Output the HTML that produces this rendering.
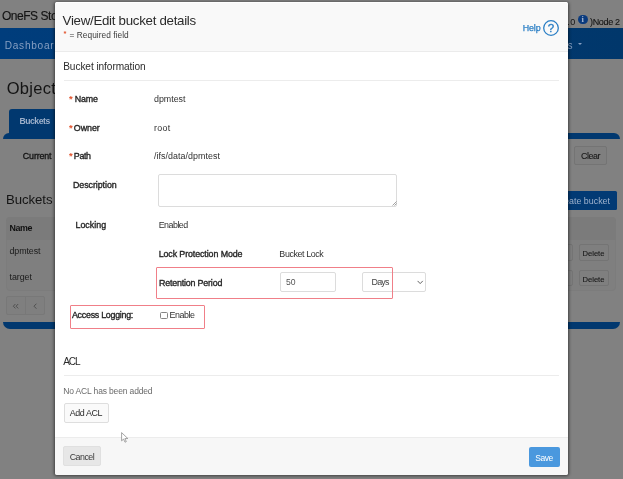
<!DOCTYPE html>
<html><head><meta charset="utf-8">
<style>
*{box-sizing:border-box;margin:0;padding:0}
html,body{width:623px;height:479px;overflow:hidden;background:#818181;font-family:'Liberation Sans', sans-serif;}
.abs{position:absolute}
.t{position:absolute;white-space:nowrap;line-height:1}
#bg{will-change:transform;position:absolute;left:0;top:0;width:623px;height:479px;background:#818181;overflow:hidden}
#modal{will-change:transform;position:absolute;left:54.8px;top:1.6px;width:513px;height:472.6px;background:#fff;border-radius:2.5px;box-shadow:0 0.5px 3px 0.5px rgba(0,0,0,.5);overflow:hidden}
</style></head><body>
<div id="bg">
<div class="abs" style="left:0.00px;top:27.80px;width:623.00px;height:31.70px;background:linear-gradient(90deg,#003d7c 0%,#01376b 100%);"></div>
<div class="abs" style="left:578.10px;top:14.60px;width:9.60px;height:9.60px;border-radius:50%;background:#0b3b7e;"></div>
<div class="abs" style="left:578.4px;top:43.2px;width:0;height:0;border-left:2.4px solid transparent;border-right:2.4px solid transparent;border-top:2.6px solid #869fc2"></div>
<div class="abs" style="left:9.00px;top:109.30px;width:71.00px;height:25.70px;background:#01386f;border-radius:3px 3px 0 0;"></div>
<div class="abs" style="left:2.80px;top:132.70px;width:617.20px;height:6.70px;background:#01386f;border-radius:7px 7px 0 0;"></div>
<div class="abs" style="left:574.30px;top:145.70px;width:32.30px;height:19.70px;border:1px solid #747474;border-radius:2px;background:#7f7f7f;"></div>
<div class="abs" style="left:500.00px;top:191.00px;width:116.60px;height:18.80px;background:#023a74;border-radius:1.5px;"></div>
<div class="abs" style="left:6.20px;top:217.00px;width:610.10px;height:74.00px;background:#7f7f7f;border:1px solid #7c7c7c;border-radius:4px;"></div>
<div class="abs" style="left:6.20px;top:217.00px;width:610.10px;height:22.50px;background:#7b7b7b;border-radius:4px 4px 0 0;"></div>
<div class="abs" style="left:578.90px;top:244.30px;width:29.80px;height:16.30px;border:1px solid #747474;border-radius:2px;background:#7f7f7f;"></div>
<div class="abs" style="left:578.90px;top:270.20px;width:29.80px;height:16.20px;border:1px solid #747474;border-radius:2px;background:#7f7f7f;"></div>
<div class="abs" style="left:540.00px;top:244.30px;width:32.60px;height:16.30px;border:1px solid #747474;border-radius:2px;background:#7f7f7f;"></div>
<div class="abs" style="left:540.00px;top:270.20px;width:32.60px;height:16.20px;border:1px solid #747474;border-radius:2px;background:#7f7f7f;"></div>
<div class="abs" style="left:6.40px;top:295.70px;width:19.90px;height:19.30px;border:1px solid #787878;border-radius:2px 0 0 2px;background:#7f7f7f;"></div>
<div class="abs" style="left:25.30px;top:295.70px;width:19.70px;height:19.30px;border:1px solid #787878;border-radius:0 2px 2px 0;background:#7f7f7f;"></div>
<svg class="abs" style="left:12px;top:302px" width="28" height="9" viewBox="0 0 28 9"><path d="M3.4 2.0 L1.3 4.2 L3.4 6.4 M6.2 2.0 L4.1 4.2 L6.2 6.4 M24.4 1.7 L22.0 4.2 L24.4 6.7" fill="none" stroke="#505050" stroke-width="1.0"/></svg>
<div class="abs" style="left:2.80px;top:321.80px;width:617.20px;height:6.90px;background:#01386f;border-radius:0 0 7px 7px;"></div>
<div class="t" style="left:1.88px;top:10.14px;font-size:12.0px;color:#141414;letter-spacing:-0.450px;-webkit-text-stroke:0.15px #141414;">OneFS Storage</div>
<div class="t" style="left:567.36px;top:17.68px;font-size:9px;color:#141414;letter-spacing:0.464px;">.0</div>
<div class="t" style="left:590.06px;top:17.68px;font-size:9px;color:#141414;letter-spacing:-0.342px;-webkit-text-stroke:0.1px #141414;">)Node 2</div>
<div class="t" style="left:4.69px;top:41.15px;font-size:10.1px;color:#869fc2;letter-spacing:0.750px;">Dashboard</div>
<div class="t" style="left:567.59px;top:41.15px;font-size:10.1px;color:#869fc2;letter-spacing:0.000px;">s</div>
<div class="t" style="left:6.71px;top:79.53px;font-size:16.5px;color:#141414;letter-spacing:0.300px;">Object</div>
<div class="t" style="left:19.38px;top:116.82px;font-size:8.6px;color:#9db0ca;letter-spacing:-0.418px;font-weight:bold;">Buckets</div>
<div class="t" style="left:22.87px;top:151.67px;font-size:8.9px;color:#141414;letter-spacing:-0.154px;-webkit-text-stroke:0.3px #141414;">Current</div>
<div class="t" style="left:580.97px;top:151.97px;font-size:8.9px;color:#181818;letter-spacing:-0.413px;-webkit-text-stroke:0.1px #181818;">Clear</div>
<div class="t" style="left:5.91px;top:193.13px;font-size:13.2px;color:#141414;letter-spacing:-0.056px;">Buckets</div>
<div class="t" style="left:554.77px;top:197.47px;font-size:8.9px;color:#9fb2cd;letter-spacing:0.000px;">Create bucket</div>
<div class="t" style="left:9.47px;top:223.87px;font-size:8.9px;color:#101010;letter-spacing:-0.373px;font-weight:bold;">Name</div>
<div class="t" style="left:9.47px;top:246.87px;font-size:8.9px;color:#1a1a1a;letter-spacing:-0.085px;">dpmtest</div>
<div class="t" style="left:9.47px;top:272.67px;font-size:8.9px;color:#1a1a1a;letter-spacing:-0.047px;">target</div>
<div class="t" style="left:582.54px;top:249.97px;font-size:7.6px;color:#161616;letter-spacing:-0.008px;-webkit-text-stroke:0.1px #161616;">Delete</div>
<div class="t" style="left:582.54px;top:275.87px;font-size:7.6px;color:#161616;letter-spacing:-0.008px;-webkit-text-stroke:0.1px #161616;">Delete</div>
<div class="t" style="left:581.6px;top:15.2px;font-size:8.5px;color:#a9b9d0;font-weight:bold;font-family:'Liberation Serif',serif">i</div>
</div>
<div id="modal">
<div class="abs" style="left:0.00px;top:0.00px;width:513.00px;height:49.60px;background:#f9f9f9;border-bottom:1px solid #ebebeb;border-top:1px solid #fff;"></div>
<div class="abs" style="left:8.50px;top:77.90px;width:495.70px;height:1.00px;background:#ececec;"></div>
<div class="abs" style="left:103.40px;top:172.40px;width:239.00px;height:32.40px;border:1px solid #dcdcdc;border-radius:2px;background:#fff;"></div>
<div class="abs" style="left:224.60px;top:270.40px;width:56.80px;height:19.60px;border:1px solid #dcdcdc;border-radius:2px;background:#fff;"></div>
<div class="abs" style="left:307.40px;top:270.40px;width:63.60px;height:19.60px;border:1px solid #dcdcdc;border-radius:2px;background:#fff;"></div>
<div class="abs" style="left:100.60px;top:265.40px;width:237.80px;height:31.30px;border:1px solid #f07f88;border-radius:1px;"></div>
<div class="abs" style="left:14.60px;top:302.70px;width:135.60px;height:23.90px;border:1px solid #f07f88;border-radius:1px;"></div>
<div class="abs" style="left:105.20px;top:310.10px;width:7.40px;height:7.40px;border:1px solid #858585;border-radius:1.5px;background:#fff;"></div>
<div class="abs" style="left:8.50px;top:372.60px;width:495.70px;height:1.00px;background:#ececec;"></div>
<div class="abs" style="left:8.50px;top:401.30px;width:45.30px;height:19.50px;border:1px solid #dedede;border-radius:2px;background:#fafafa;"></div>
<div class="abs" style="left:0.00px;top:435.30px;width:513.00px;height:37.30px;background:#f7f7f7;border-top:1px solid #ececec;"></div>
<div class="abs" style="left:8.30px;top:444.40px;width:38.10px;height:20.00px;border:1px solid #e0e0e0;border-radius:2px;background:#e7e7e7;"></div>
<div class="abs" style="left:473.70px;top:445.40px;width:30.90px;height:20.00px;border-radius:2px;background:#4a98de;"></div>
<div class="t" style="left:7.60px;top:12.04px;font-size:13.3px;color:#2b2b2b;letter-spacing:-0.287px;">View/Edit bucket details</div>
<div class="t" style="left:14.50px;top:28.67px;font-size:8.3px;color:#3a3a3a;letter-spacing:0.056px;">= Required field</div>
<div class="t" style="left:467.67px;top:21.67px;font-size:8.9px;color:#2b7fc5;letter-spacing:-0.066px;-webkit-text-stroke:0.25px #2b7fc5;">Help</div>
<div class="t" style="left:8.19px;top:59.95px;font-size:10.1px;color:#2b2b2b;letter-spacing:-0.065px;">Bucket information</div>
<div class="t" style="left:19.87px;top:93.07px;font-size:8.9px;color:#262626;letter-spacing:-0.173px;-webkit-text-stroke:0.35px #262626;">Name</div>
<div class="t" style="left:98.97px;top:93.07px;font-size:8.9px;color:#303030;letter-spacing:-0.018px;">dpmtest</div>
<div class="t" style="left:18.87px;top:121.67px;font-size:8.9px;color:#262626;letter-spacing:-0.068px;-webkit-text-stroke:0.35px #262626;">Owner</div>
<div class="t" style="left:98.97px;top:121.67px;font-size:8.9px;color:#303030;letter-spacing:0.357px;">root</div>
<div class="t" style="left:18.87px;top:149.97px;font-size:8.9px;color:#262626;letter-spacing:-0.366px;-webkit-text-stroke:0.35px #262626;">Path</div>
<div class="t" style="left:98.97px;top:149.97px;font-size:8.9px;color:#303030;letter-spacing:0.059px;">/ifs/data/dpmtest</div>
<div class="t" style="left:17.97px;top:178.87px;font-size:8.9px;color:#262626;letter-spacing:-0.064px;-webkit-text-stroke:0.35px #262626;">Description</div>
<div class="t" style="left:20.47px;top:219.27px;font-size:8.9px;color:#262626;letter-spacing:0.012px;-webkit-text-stroke:0.35px #262626;">Locking</div>
<div class="t" style="left:103.67px;top:219.27px;font-size:8.9px;color:#303030;letter-spacing:-0.502px;">Enabled</div>
<div class="t" style="left:103.67px;top:248.17px;font-size:8.9px;color:#262626;letter-spacing:-0.104px;-webkit-text-stroke:0.35px #262626;">Lock Protection Mode</div>
<div class="t" style="left:224.37px;top:248.17px;font-size:8.9px;color:#303030;letter-spacing:-0.399px;">Bucket Lock</div>
<div class="t" style="left:103.97px;top:276.57px;font-size:8.9px;color:#262626;letter-spacing:-0.184px;-webkit-text-stroke:0.35px #262626;">Retention Period</div>
<div class="t" style="left:231.08px;top:276.42px;font-size:8.6px;color:#555;letter-spacing:-0.130px;">50</div>
<div class="t" style="left:316.47px;top:276.17px;font-size:8.9px;color:#444;letter-spacing:-0.722px;">Days</div>
<div class="t" style="left:16.97px;top:309.27px;font-size:8.9px;color:#262626;letter-spacing:-0.268px;-webkit-text-stroke:0.35px #262626;">Access Logging:</div>
<div class="t" style="left:114.57px;top:309.27px;font-size:8.9px;color:#303030;letter-spacing:-0.435px;">Enable</div>
<div class="t" style="left:8.19px;top:354.95px;font-size:10.1px;color:#2b2b2b;letter-spacing:-1.164px;">ACL</div>
<div class="t" style="left:8.29px;top:384.60px;font-size:8.5px;color:#6a6a6a;letter-spacing:-0.150px;">No ACL has been added</div>
<div class="t" style="left:14.67px;top:406.57px;font-size:8.9px;color:#2b2b2b;letter-spacing:-0.361px;">Add ACL</div>
<div class="t" style="left:14.67px;top:450.87px;font-size:8.9px;color:#3a3a3a;letter-spacing:-0.515px;">Cancel</div>
<div class="t" style="left:480.29px;top:452.00px;font-size:8.5px;color:#fff;letter-spacing:-0.452px;">Save</div>
<div class="t" style="left:14.00px;top:92.30px;font-size:9.5px;color:#e2532c;font-weight:bold">*</div><div class="t" style="left:14.00px;top:120.90px;font-size:9.5px;color:#e2532c;font-weight:bold">*</div><div class="t" style="left:14.00px;top:149.20px;font-size:9.5px;color:#e2532c;font-weight:bold">*</div><div class="t" style="left:8.40px;top:28.00px;font-size:7.5px;color:#e2532c;font-weight:bold">*</div>

<svg class="abs" style="left:487.80px;top:17.90px" width="16" height="16" viewBox="0 0 16 16"><circle cx="8" cy="8" r="7.3" fill="none" stroke="#2b7fc5" stroke-width="1.3"/><text x="8" y="12.1" font-size="11.5" text-anchor="middle" fill="#2b7fc5" stroke="#2b7fc5" stroke-width="0.35" font-family="Liberation Sans, sans-serif">?</text></svg>
<svg class="abs" style="left:361.80px;top:278.00px" width="7" height="5" viewBox="0 0 7 5"><path d="M0.6 0.9 L3.2 3.6 L5.8 0.9" fill="none" stroke="#555" stroke-width="0.9"/></svg>
<svg class="abs" style="left:336.60px;top:199.20px" width="5" height="5" viewBox="0 0 5 5"><path d="M4.5 0.5 L0.5 4.5 M4.5 2.5 L2.5 4.5" stroke="#666" stroke-width="0.6"/></svg>
<svg class="abs" style="left:66.20px;top:430.00px" width="9" height="13" viewBox="0 0 9 13"><path d="M0.6 0.6 L0.6 8.8 L2.6 7.1 L4.0 10.2 L5.3 9.6 L3.9 6.6 L6.8 6.5 Z" fill="#fff" stroke="#808080" stroke-width="0.7"/></svg>

</div>
</body></html>
